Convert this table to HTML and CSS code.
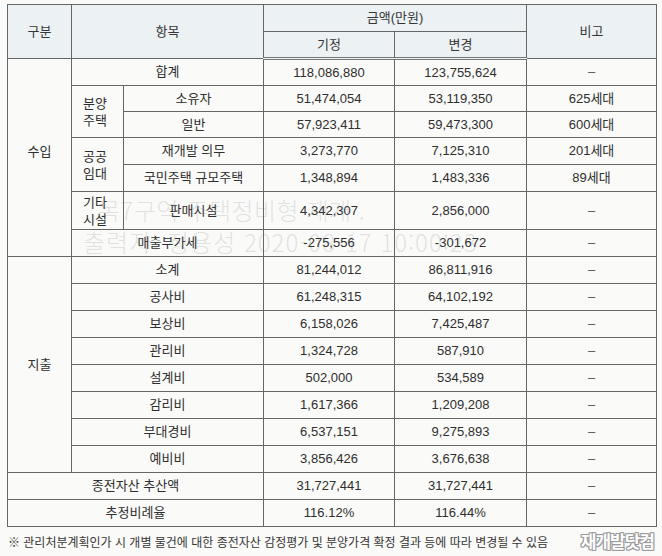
FILE: index.html
```html
<!DOCTYPE html>
<html lang="ko">
<head>
<meta charset="utf-8">
<title>사업비 변경</title>
<link rel="stylesheet" href="styles.css">
</head>
<body>
<div class="sheet">
  <table class="budget">
    <colgroup>
      <col class="c-gubun">
      <col class="c-sub">
      <col class="c-item">
      <col class="c-num">
      <col class="c-num2">
      <col class="c-note">
    </colgroup>
    <thead>
      <tr class="h1">
        <th rowspan="2">구분</th>
        <th rowspan="2" colspan="2">항목</th>
        <th colspan="2">금액(만원)</th>
        <th rowspan="2">비고</th>
      </tr>
      <tr class="h2">
        <th>기정</th>
        <th>변경</th>
      </tr>
    </thead>
    <tbody>
      <tr>
        <td rowspan="7" class="grp grp-in">수입</td>
        <td colspan="2">합계</td>
        <td>118,086,880</td>
        <td>123,755,624</td>
        <td class="dash">–</td>
      </tr>
      <tr class="short">
        <td rowspan="2" class="sub">분양<br>주택</td>
        <td>소유자</td>
        <td>51,474,054</td>
        <td>53,119,350</td>
        <td>625세대</td>
      </tr>
      <tr class="short">
        <td>일반</td>
        <td>57,923,411</td>
        <td>59,473,300</td>
        <td>600세대</td>
      </tr>
      <tr>
        <td rowspan="2" class="sub">공공<br>임대</td>
        <td>재개발 의무</td>
        <td>3,273,770</td>
        <td>7,125,310</td>
        <td>201세대</td>
      </tr>
      <tr>
        <td>국민주택 규모주택</td>
        <td>1,348,894</td>
        <td>1,483,336</td>
        <td>89세대</td>
      </tr>
      <tr class="tall">
        <td class="sub">기타<br>시설</td>
        <td>판매시설</td>
        <td>4,342,307</td>
        <td>2,856,000</td>
        <td class="dash">–</td>
      </tr>
      <tr>
        <td colspan="2">매출부가세</td>
        <td>-275,556</td>
        <td>-301,672</td>
        <td class="dash">–</td>
      </tr>
      <tr>
        <td rowspan="8" class="grp">지출</td>
        <td colspan="2">소계</td>
        <td>81,244,012</td>
        <td>86,811,916</td>
        <td class="dash">–</td>
      </tr>
      <tr>
        <td colspan="2">공사비</td>
        <td>61,248,315</td>
        <td>64,102,192</td>
        <td class="dash">–</td>
      </tr>
      <tr>
        <td colspan="2">보상비</td>
        <td>6,158,026</td>
        <td>7,425,487</td>
        <td class="dash">–</td>
      </tr>
      <tr>
        <td colspan="2">관리비</td>
        <td>1,324,728</td>
        <td>587,910</td>
        <td class="dash">–</td>
      </tr>
      <tr>
        <td colspan="2">설계비</td>
        <td>502,000</td>
        <td>534,589</td>
        <td class="dash">–</td>
      </tr>
      <tr>
        <td colspan="2">감리비</td>
        <td>1,617,366</td>
        <td>1,209,208</td>
        <td class="dash">–</td>
      </tr>
      <tr>
        <td colspan="2">부대경비</td>
        <td>6,537,151</td>
        <td>9,275,893</td>
        <td class="dash">–</td>
      </tr>
      <tr>
        <td colspan="2">예비비</td>
        <td>3,856,426</td>
        <td>3,676,638</td>
        <td class="dash">–</td>
      </tr>
      <tr>
        <td colspan="3">종전자산 추산액</td>
        <td>31,727,441</td>
        <td>31,727,441</td>
        <td class="dash">–</td>
      </tr>
      <tr>
        <td colspan="3">추정비례율</td>
        <td>116.12%</td>
        <td>116.44%</td>
        <td class="dash">–</td>
      </tr>
    </tbody>
  </table>

  <div class="foot">
    <p class="note">※ 관리처분계획인가 시 개별 물건에 대한 종전자산 감정평가 및 분양가격 확정 결과 등에 따라 변경될 수 있음</p>
    <span class="logo">재개발닷컴</span>
  </div>

  <div class="wm wm1">목7구역 주택정비형 재개 .</div>
  <div class="wm wm2">출력자: 정용성 2020-08-17 10:00:23</div>
</div>
</body>
</html>
```

FILE: styles.css
```css
html, body {
  margin: 0;
  padding: 0;
  background: #fafaf8;
}

body {
  font-family: "Liberation Sans", "Noto Sans CJK KR", sans-serif;
  color: #2e2e2e;
}

.sheet {
  position: relative;
  width: 662px;
  height: 556px;
  padding: 4px 6px 0 7px;
  box-sizing: border-box;
  overflow: hidden;
}

.budget {
  border-collapse: collapse;
  table-layout: fixed;
  width: 649px;
  font-size: 13px;
  line-height: 16px;
}

.c-gubun { width: 64px; }
.c-sub   { width: 52px; }
.c-item  { width: 140px; }
.c-num   { width: 131px; }
.c-num2  { width: 132px; }
.c-note  { width: 130px; }

.budget th,
.budget td {
  border: 1px solid #666;
  text-align: center;
  vertical-align: middle;
  padding: 0;
  font-weight: normal;
  white-space: nowrap;
}

.budget thead th {
  background: #ecf1f4;
  color: #363636;
}

.budget thead tr {
  height: 27px;
}

.budget thead tr.h2 th {
  border-bottom: 3px double #777;
}

.budget tbody tr {
  height: 27px;
}

.budget tbody tr.short {
  height: 26px;
}

.budget tbody tr.tall {
  height: 38px;
}

.budget td.sub {
  line-height: 17px;
  text-align: left;
  padding-left: 11px;
}

.budget td.grp-in {
  padding-bottom: 12px;
}

.budget td.dash {
  color: #555;
}

.foot {
  display: flex;
  align-items: center;
  justify-content: space-between;
  margin-top: 4px;
  padding-left: 1px;
}

.note {
  margin: 0;
  font-size: 12px;
  letter-spacing: 0;
  color: #363636;
  white-space: nowrap;
}

.logo {
  font-family: "Noto Sans CJK KR", sans-serif;
  font-size: 17px;
  line-height: 20px;
  font-weight: bold;
  letter-spacing: -1px;
  color: #ffffff;
  margin-right: 2px;
  text-shadow:
    1px 0 0 #9a9a9a, -1px 0 0 #9a9a9a,
    0 1px 0 #9a9a9a, 0 -1px 0 #9a9a9a,
    1px 1px 0 #9a9a9a, -1px -1px 0 #9a9a9a,
    1px -1px 0 #9a9a9a, -1px 1px 0 #9a9a9a;
}

.wm {
  position: absolute;
  font-family: "Noto Sans CJK KR", sans-serif;
  font-weight: 300;
  font-size: 24px;
  color: rgba(120, 120, 120, 0.2);
  white-space: nowrap;
  pointer-events: none;
  letter-spacing: 0.5px;
}

.wm1 {
  left: 98px;
  top: 192px;
}

.wm2 {
  left: 83px;
  top: 224px;
  letter-spacing: 1px;
}
```
